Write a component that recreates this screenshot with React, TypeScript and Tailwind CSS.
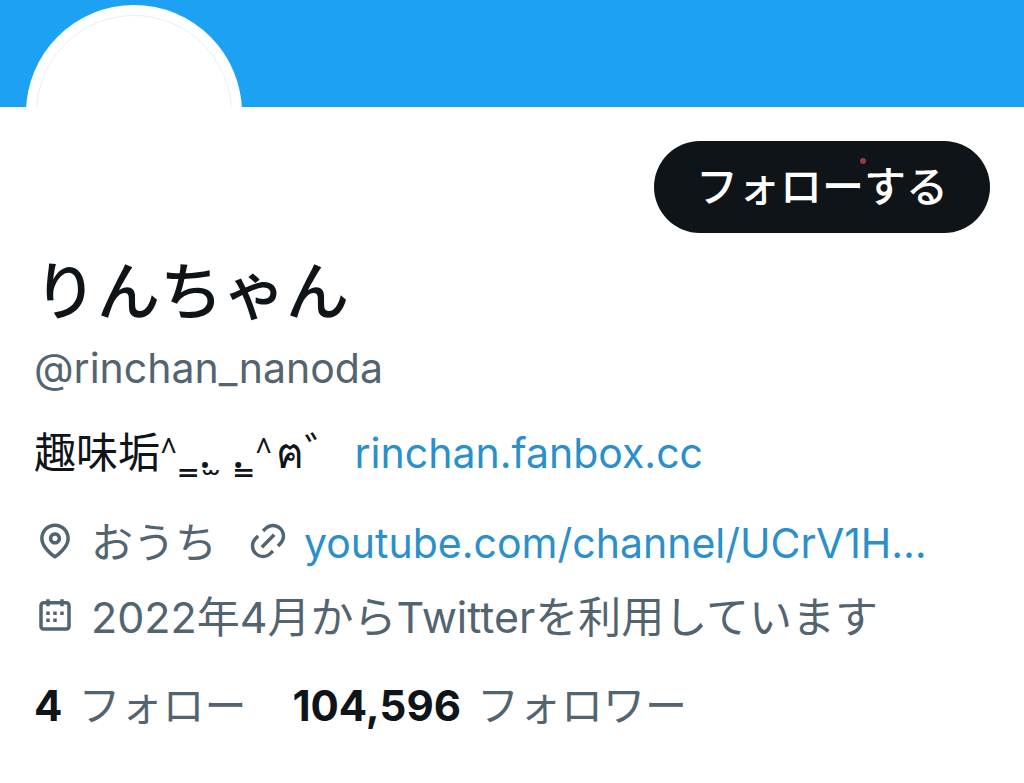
import type { ReactNode } from "react";

type IconProps = {
  d: string;
};

const PIN =
  "M12 7c-1.93 0-3.5 1.57-3.5 3.5S10.07 14 12 14s3.5-1.57 3.5-3.5S13.93 7 12 7zm0 5c-.827 0-1.5-.673-1.5-1.5S11.173 9 12 9s1.5.673 1.5 1.5S12.827 12 12 12zm0-10c-4.687 0-8.5 3.813-8.5 8.5 0 5.967 7.621 11.116 7.945 11.332l.555.37.555-.37c.324-.216 7.945-5.365 7.945-11.332C20.5 5.813 16.687 2 12 2zm0 17.77c-1.665-1.241-6.5-5.196-6.5-9.27C5.5 6.916 8.416 4 12 4s6.5 2.916 6.5 6.5c0 4.073-4.835 8.028-6.5 9.27z";
const LINK =
  "M18.36 5.64c-1.95-1.96-5.11-1.96-7.07 0L9.88 7.05 8.46 5.64l1.42-1.42c2.73-2.73 7.16-2.73 9.9 0 2.73 2.74 2.73 7.17 0 9.9l-1.42 1.42-1.41-1.42 1.41-1.41c1.96-1.96 1.96-5.12 0-7.07zm-2.12 3.53l-7.07 7.07-1.41-1.41 7.07-7.07 1.41 1.41zm-12.02.71l1.42-1.42 1.41 1.42-1.41 1.41c-1.96 1.96-1.96 5.12 0 7.07 1.95 1.96 5.11 1.96 7.07 0l1.41-1.41 1.42 1.41-1.42 1.42c-2.73 2.73-7.16 2.73-9.9 0-2.73-2.74-2.73-7.17 0-9.9z";
const CALENDAR =
  "M7 4V3h2v1h6V3h2v1h1.5C19.89 4 21 5.12 21 6.5v12c0 1.38-1.11 2.5-2.5 2.5h-13C4.12 21 3 19.88 3 18.5v-12C3 5.12 4.12 4 5.5 4H7zm0 2H5.5c-.27 0-.5.22-.5.5v12c0 .28.23.5.5.5h13c.28 0 .5-.22.5-.5v-12c0-.28-.22-.5-.5-.5H17v1h-2V6H9v1H7V6zm0 6h2v-2H7v2zm0 4h2v-2H7v2zm4-4h2v-2h-2v2zm0 4h2v-2h-2v2zm4-4h2v-2h-2v2z";

function Icon({ d }: IconProps) {
  return (
    <svg className="w-[42px] h-[42px] mb-1 shrink-0" fill="currentColor" viewBox="0 0 24 24" aria-hidden="true">
      <path d={d} />
    </svg>
  );
}

function Stat({ value, children }: { value: string; children: ReactNode }) {
  return (
    <a href="#" className="flex items-baseline gap-4">
      <span className="font-bold text-[#0f1419]">{value}</span>
      <span>{children}</span>
    </a>
  );
}

export default function App() {
  return (
    <div className="bg-white pb-10 font-['Inter','Noto_Sans_CJK_JP',sans-serif] text-[42px] leading-[60px] text-[#536471]">
      {/* Banner, the avatar is cut off at its lower edge */}
      <div className="relative h-[107px] overflow-hidden bg-[#1da1f2]">
        <div className="absolute left-[26px] top-[5px] size-[216px] rounded-full bg-white p-[10px]">
          <div className="size-full rounded-full border border-[#e3f1fa]" />
        </div>
      </div>

      <main className="px-[34px]">
        <div className="flex justify-end pt-[34px]">
          <button className="relative h-[92px] rounded-full bg-[#0f1419] px-[42px] font-medium text-white">
            フォローする
            <span className="absolute left-[206px] top-[17px] size-[6px] rounded-full bg-[#9b3a3e]" />
          </button>
        </div>

        <h1 className="mt-[14px] text-[63px] leading-[88px] font-medium text-[#0f1419]">りんちゃん</h1>
        <p className="mt-[3px] text-[41px]">@rinchan_nanoda</p>

        <p className="mt-6 whitespace-pre text-[#0f1419]">
          趣味垢
          <span className="font-['Roboto',sans-serif] font-light">^</span>
          <span className="font-['Noto_Sans',sans-serif] font-medium"> ̳ .̫  .̳ </span>
          <span className="mr-1 font-['Roboto',sans-serif] font-light">^</span>
          ฅ゛
          <a href="#" className="ml-2 text-[41px] text-[#2b8fcb]">
            rinchan.fanbox.cc
          </a>
        </p>

        <div className="mt-[29px] flex items-center gap-[30px]">
          <span className="flex items-center gap-[15px]">
            <Icon d={PIN} />
            おうち
          </span>
          <span className="flex items-center gap-[15px]">
            <Icon d={LINK} />
            <a href="#" className="text-[41px] text-[#2b8fcb]">
              youtube.com/channel/UCrV1H…
            </a>
          </span>
        </div>
        <div className="mt-[14px] flex items-center gap-[15px] text-[43px]">
          <Icon d={CALENDAR} />
          2022年4月からTwitterを利用しています
        </div>

        <div className="mt-[29px] flex gap-[46px]">
          <Stat value="4">フォロー</Stat>
          <Stat value="104,596">フォロワー</Stat>
        </div>
      </main>
    </div>
  );
}
